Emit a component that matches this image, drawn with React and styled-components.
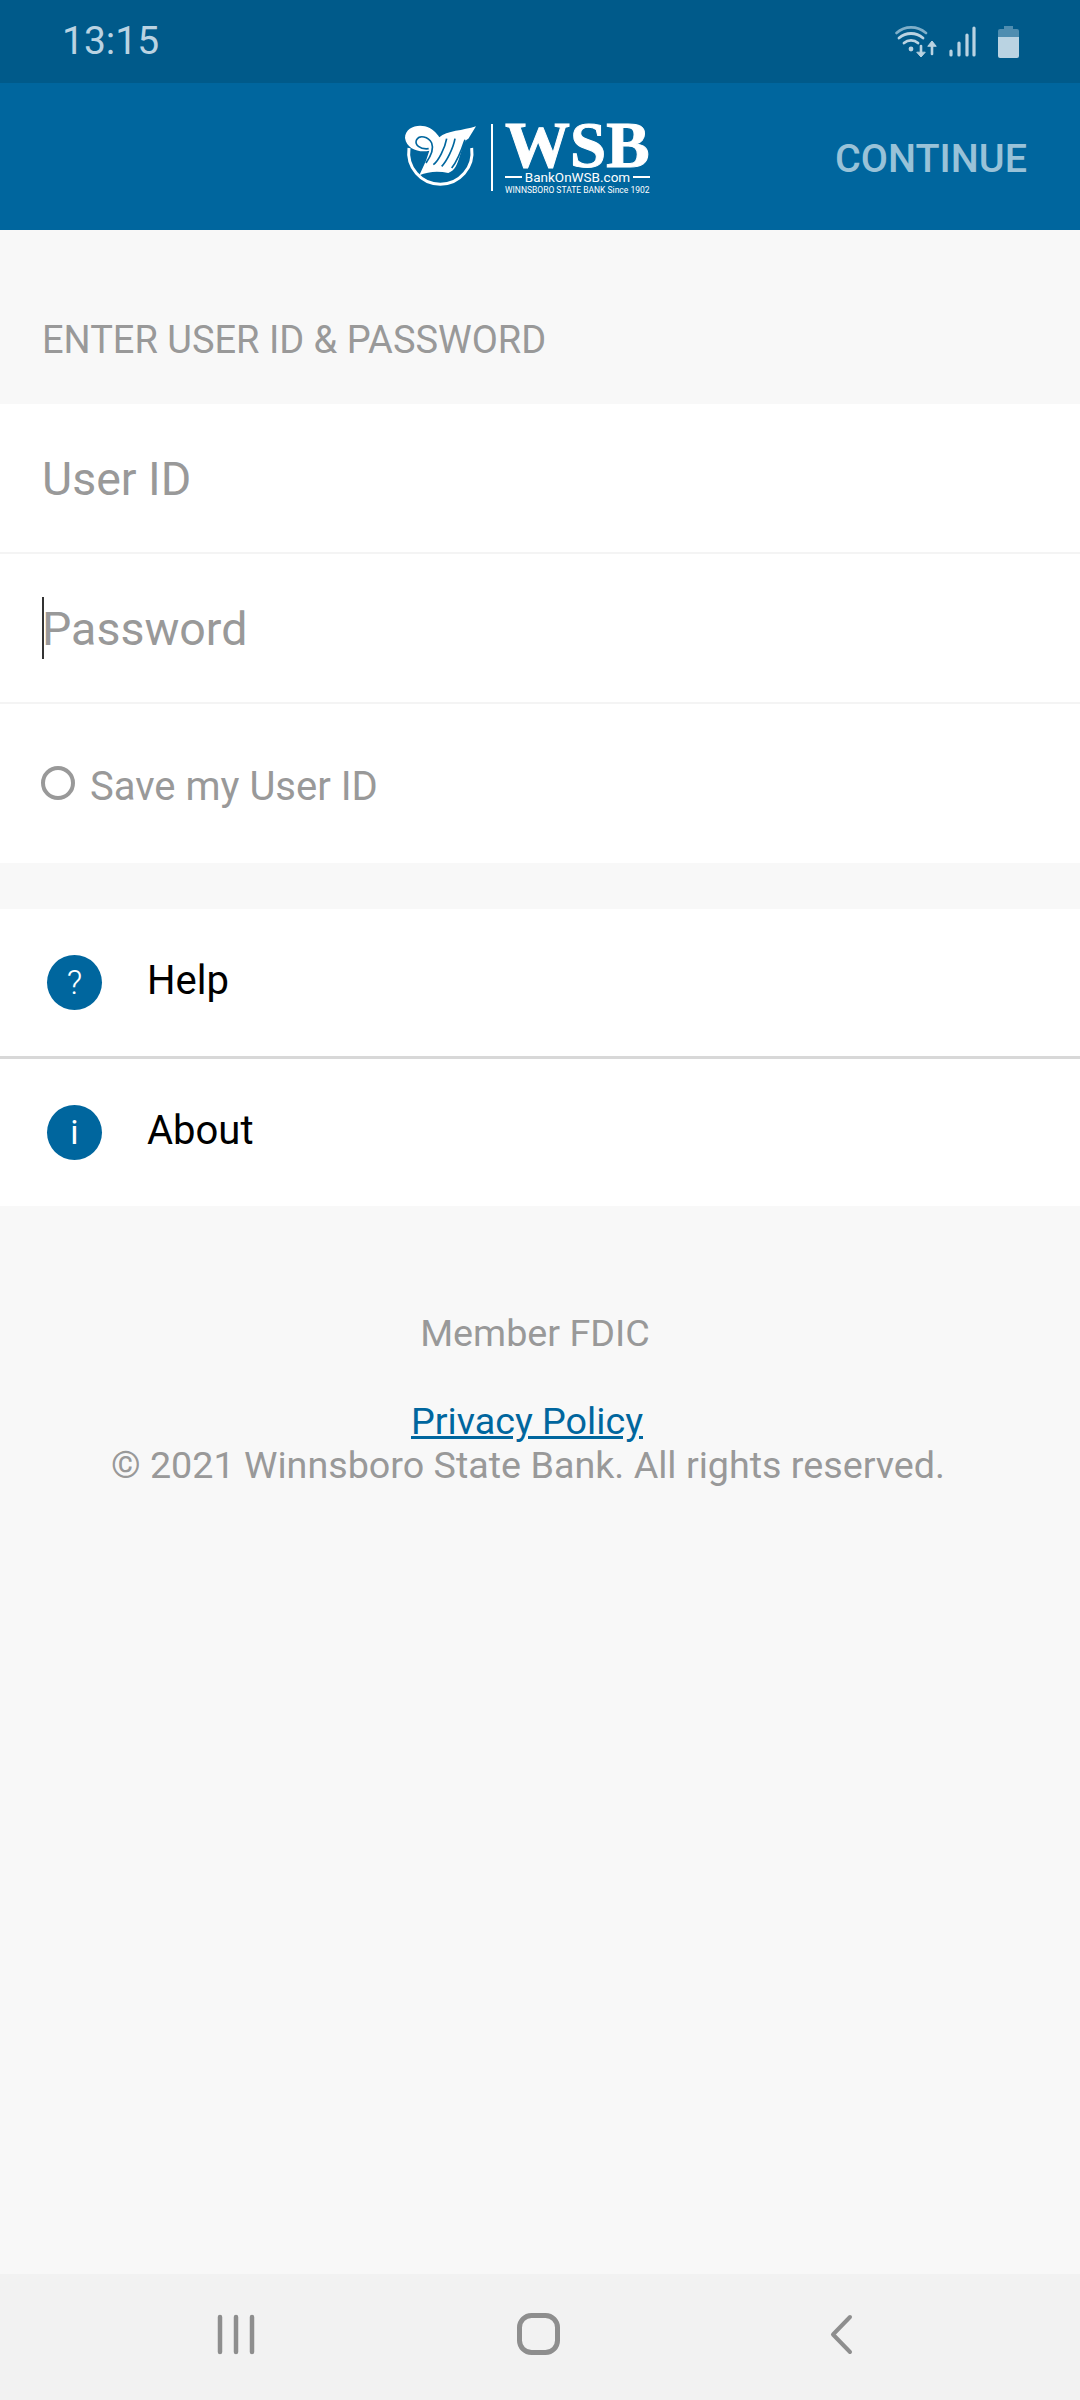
import React from 'react';
import styled, { createGlobalStyle } from 'styled-components';

const GlobalStyle = createGlobalStyle`
  * {
    box-sizing: border-box;
  }
  html, body {
    margin: 0;
    padding: 0;
    background: #f8f8f8;
    font-family: Roboto, 'Liberation Sans', sans-serif;
  }
`;

const Page = styled.div`
  width: 1080px;
  height: 2400px;
  display: flex;
  flex-direction: column;
  background: #f8f8f8;
`;

const StatusBar = styled.div`
  height: 83px;
  flex: none;
  display: flex;
  align-items: center;
  justify-content: space-between;
  padding: 0 61px 0 62px;
  background: #005a8a;
  color: #bad3e2;
`;

const Time = styled.span`
  font-size: 39px;
  line-height: 1;
`;

const StatusIcons = styled.div`
  display: flex;
  align-items: center;
  gap: 12px;
  svg:last-child {
    margin-left: 10px;
  }
`;

const Header = styled.header`
  height: 147px;
  flex: none;
  display: flex;
  align-items: center;
  justify-content: flex-end;
  position: relative;
  padding: 3px 53px 0 0;
  background: #00669e;
`;

const Logo = styled.div`
  position: absolute;
  left: 400px;
  top: 35px;
  display: flex;
  align-items: flex-start;
  color: #fff;
`;

const LogoRule = styled.div`
  width: 2px;
  height: 67px;
  margin: 6px 12px 0 6px;
  background: #fff;
`;

const LogoText = styled.div`
  width: 145px;
  padding-top: 5px;
  display: flex;
  flex-direction: column;
`;

const LogoName = styled.div`
  font-family: 'Liberation Serif', serif;
  font-weight: 700;
  font-size: 65px;
  line-height: 44px;
  height: 47px;
  -webkit-text-stroke: 1px #fff;
  white-space: nowrap;
`;

const LogoUrl = styled.div`
  display: flex;
  align-items: center;
  gap: 3px;
  font-size: 13.5px;
  line-height: 14px;
  &::before,
  &::after {
    content: '';
    flex: 1;
    height: 1.5px;
    background: #fff;
  }
`;

const LogoTag = styled.div`
  font-size: 8.5px;
  line-height: 12px;
  white-space: nowrap;
`;

const Continue = styled.span`
  font-size: 39.5px;
  font-weight: 500;
  color: #99c2d8;
`;

const SectionLabel = styled.div`
  height: 174px;
  flex: none;
  display: flex;
  align-items: center;
  padding: 46px 0 0 42px;
  font-size: 38px;
  color: #999;
`;

const FormGroup = styled.section`
  background: #fff;
  flex: none;
`;

const Field = styled.div`
  height: 150px;
  display: flex;
  align-items: center;
  padding: 2px 0 0 42px;
  border-bottom: 2px solid #f4f4f4;
  font-size: 46.5px;
  color: #999;
`;

const Caret = styled.span`
  width: 2px;
  height: 62px;
  margin: -2px -2px 0 0;
  background: #333;
`;

const SaveRow = styled.div`
  height: 159px;
  display: flex;
  align-items: center;
  gap: 15px;
  padding: 5px 0 0 41px;
  font-size: 40px;
  color: #999;
`;

const Radio = styled.span`
  width: 34px;
  height: 34px;
  border: 4px solid #999;
  border-radius: 50%;
  margin-top: -7px;
`;

const MenuGroup = styled.nav`
  margin-top: 46px;
  background: #fff;
  flex: none;
`;

const MenuRow = styled.div`
  height: ${(p) => (p.$divider ? '150px' : '147px')};
  display: flex;
  align-items: center;
  padding: 0 0 1px 47px;
  gap: 45px;
  font-size: 40px;
  color: #000;
  border-bottom: ${(p) => (p.$divider ? '3px solid #d8d8d8' : 'none')};
`;

const MenuLabel = styled.span`
  margin-bottom: 3px;
`;

const MenuIcon = styled.span`
  width: 55px;
  height: 55px;
  flex: none;
  display: flex;
  align-items: center;
  justify-content: center;
  border-radius: 50%;
  background: #00669e;
  color: #fff;
  font-size: 34px;
  font-weight: ${(p) => p.$weight || 300};
`;

const Legal = styled.footer`
  flex: 1;
  display: flex;
  flex-direction: column;
  align-items: center;
  padding: 105px 24px 0 0;
  font-size: 37.7px;
  line-height: 44px;
  color: #999;
`;

const Member = styled.div`
  margin: 0 0 44px 14px;
`;

const Policy = styled.a`
  margin-right: 2px;
  color: #00669e;
  text-decoration: underline;
`;

const NavBar = styled.div`
  height: 126px;
  flex: none;
  display: flex;
  align-items: center;
  gap: 262px;
  padding: 0 0 6px 217px;
  background: #f2f2f2;
  svg:last-child {
    margin-left: 8px;
  }
`;

const WifiIcon = () => (
  <svg width="42" height="32" viewBox="0 0 42 32" fill="none" strokeLinecap="round">
    <path d="M1.500 7C10 -0.500 22 -0.500 31 7" stroke="#7fafc9" strokeWidth="2.600" />
    <path d="M4 12C11 6 21 6 28 12" stroke="#bad3e2" strokeWidth="2.800" />
    <path d="M9 17C13 13.500 19 13.500 23 17" stroke="#bad3e2" strokeWidth="2.800" />
    <circle cx="16" cy="23" r="2.400" fill="#bad3e2" />
    <path d="M26 20V29" stroke="#bad3e2" strokeWidth="2.600" />
    <path d="M22 26.500L26 31L30 26.500Z" fill="#bad3e2" stroke="#bad3e2" strokeWidth="1" />
    <path d="M37 28V18" stroke="#bad3e2" strokeWidth="2.600" />
    <path d="M33 20L37 15L41 20Z" fill="#bad3e2" stroke="#bad3e2" strokeWidth="1" />
  </svg>
);

const SignalIcon = () => (
  <svg width="27" height="31" viewBox="0 0 27 31" fill="none" stroke="#bad3e2" strokeWidth="3.200" strokeLinecap="round">
    <path d="M2 29V25" />
    <path d="M10 29V17" />
    <path d="M18 29V9" />
    <path d="M25 29V2" />
  </svg>
);

const BatteryIcon = () => (
  <svg width="21" height="32" viewBox="0 0 21 32">
    <path d="M6 0H15V3H19Q21 3 21 5V11H0V5Q0 3 2 3H6Z" fill="#4f8db0" />
    <path d="M0 11H21V30Q21 32 19 32H2Q0 32 0 30Z" fill="#bad3e2" />
  </svg>
);

// the bank's script W: a white ribbon with a curl, open ring behind it
const LogoMark = () => (
  <svg width="85" height="85" viewBox="0 0 255 255">
    <path d="M27 90A95 95 0 1 0 215 90" fill="none" stroke="#fff" strokeWidth="9" />
    <path
      d="M228 25L205 62C190 68 188 90 180 112C172 140 165 158 145 165C115 158 85 160 58 172L78 128L88 98C60 105 20 95 15 60C15 30 50 18 75 25C95 30 110 45 118 58C140 38 190 38 228 25Z"
      fill="#fff"
    />
    <g fill="none" stroke="#00669e">
      <path d="M86 92C60 95 42 80 50 65C58 50 85 55 95 75C102 92 92 115 78 135" strokeWidth="5" />
      <path d="M140 62C135 90 115 130 100 140" strokeWidth="5" />
      <path d="M165 62C160 90 140 130 125 145" strokeWidth="5" />
      <path d="M195 65C185 95 175 125 155 150" strokeWidth="5" />
    </g>
  </svg>
);

const App = () => {
  return (
    <Page>
      <GlobalStyle />
      <StatusBar>
        <Time>13:15</Time>
        <StatusIcons>
          <WifiIcon />
          <SignalIcon />
          <BatteryIcon />
        </StatusIcons>
      </StatusBar>
      <Header>
        <Logo>
          <LogoMark />
          <LogoRule />
          <LogoText>
            <LogoName>WSB</LogoName>
            <LogoUrl>BankOnWSB.com</LogoUrl>
            <LogoTag>WINNSBORO STATE BANK Since 1902</LogoTag>
          </LogoText>
        </Logo>
        <Continue>CONTINUE</Continue>
      </Header>
      <SectionLabel>ENTER USER ID &amp; PASSWORD</SectionLabel>
      <FormGroup>
        <Field>User ID</Field>
        <Field>
          <Caret />
          Password
        </Field>
        <SaveRow>
          <Radio />
          Save my User ID
        </SaveRow>
      </FormGroup>
      <MenuGroup>
        <MenuRow $divider>
          <MenuIcon>?</MenuIcon>
          <MenuLabel>Help</MenuLabel>
        </MenuRow>
        <MenuRow>
          <MenuIcon $weight={400}>i</MenuIcon>
          <MenuLabel>About</MenuLabel>
        </MenuRow>
      </MenuGroup>
      <Legal>
        <Member>Member FDIC</Member>
        <Policy>Privacy Policy</Policy>
        <div>© 2021 Winnsboro State Bank. All rights reserved.</div>
      </Legal>
      <NavBar>
        <svg width="38" height="41" viewBox="0 0 38 41" stroke="#8e8e8e" strokeWidth="4.500" strokeLinecap="round">
          <path d="M3 3V38M19 3V38M35 3V38" />
        </svg>
        <svg width="43" height="42" viewBox="0 0 43 42" fill="none" stroke="#8e8e8e" strokeWidth="5">
          <rect x="2.500" y="2.500" width="38" height="37" rx="12" />
        </svg>
        <svg width="23" height="41" viewBox="0 0 23 41" fill="none" stroke="#8e8e8e" strokeWidth="4" strokeLinecap="round" strokeLinejoin="round">
          <path d="M20 3L3 20.500L20 38" />
        </svg>
      </NavBar>
    </Page>
  );
};

export default App;
